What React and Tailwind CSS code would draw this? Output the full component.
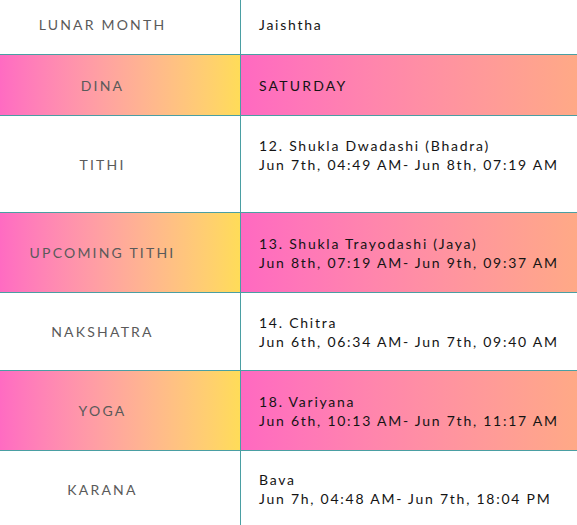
import React from "react";

const rows = [
  { label: "LUNAR MONTH", lines: ["Jaishtha"], h: "h-[55px]", lift: true },
  { label: "DINA", lines: ["SATURDAY"], h: "h-[61px]", hl: true, caps: true },
  {
    label: "TITHI",
    lines: ["12. Shukla Dwadashi (Bhadra)", "Jun 7th, 04:49 AM- Jun 8th, 07:19 AM"],
    h: "h-[97px]",
    extra: true,
  },
  {
    label: "UPCOMING TITHI",
    lines: ["13. Shukla Trayodashi (Jaya)", "Jun 8th, 07:19 AM- Jun 9th, 09:37 AM"],
    h: "h-[80px]",
    hl: true,
  },
  {
    label: "NAKSHATRA",
    lines: ["14. Chitra", "Jun 6th, 06:34 AM- Jun 7th, 09:40 AM"],
    h: "h-[78px]",
  },
  {
    label: "YOGA",
    lines: ["18. Variyana", "Jun 6th, 10:13 AM- Jun 7th, 11:17 AM"],
    h: "h-[80px]",
    hl: true,
  },
  {
    label: "KARANA",
    lines: ["Bava", "Jun 7h, 04:48 AM- Jun 7th, 18:04 PM"],
    h: "h-[76px]",
    last: true,
  },
];

export default function App() {
  return (
    <div className="w-[577px] h-[525px] overflow-hidden bg-white font-['Lato',sans-serif]">
      {rows.map((r) => (
        <div
          key={r.label}
          className={`flex ${r.h} ${r.last ? "" : "border-b border-[#4a9fa3]"}`}
        >
          <div
            className={`w-[241px] shrink-0 border-r border-[#4a9fa3] flex items-center justify-center pr-[35px] ${
              r.lift ? "pb-[6px]" : ""
            } ${r.hl ? "bg-gradient-to-r from-[#ff6bc2] to-[#ffdc58]" : ""}`}
          >
            <span className="text-[14px] tracking-[2.2px] text-[#5a5a5a]">{r.label}</span>
          </div>
          <div
            className={`flex-1 flex flex-col justify-center pl-[18px] text-[14px] leading-[19px] text-[#141414] ${
              r.lift ? "pb-[6px]" : ""
            } ${r.extra ? "pb-[19px]" : ""} ${
              r.hl ? "bg-gradient-to-r from-[#ff69c1] to-[#ffa986]" : ""
            } ${r.caps ? "tracking-[2.2px]" : "tracking-[1.75px]"}`}
          >
            {r.lines.map((l) => (
              <div key={l}>{l}</div>
            ))}
          </div>
        </div>
      ))}
    </div>
  );
}
